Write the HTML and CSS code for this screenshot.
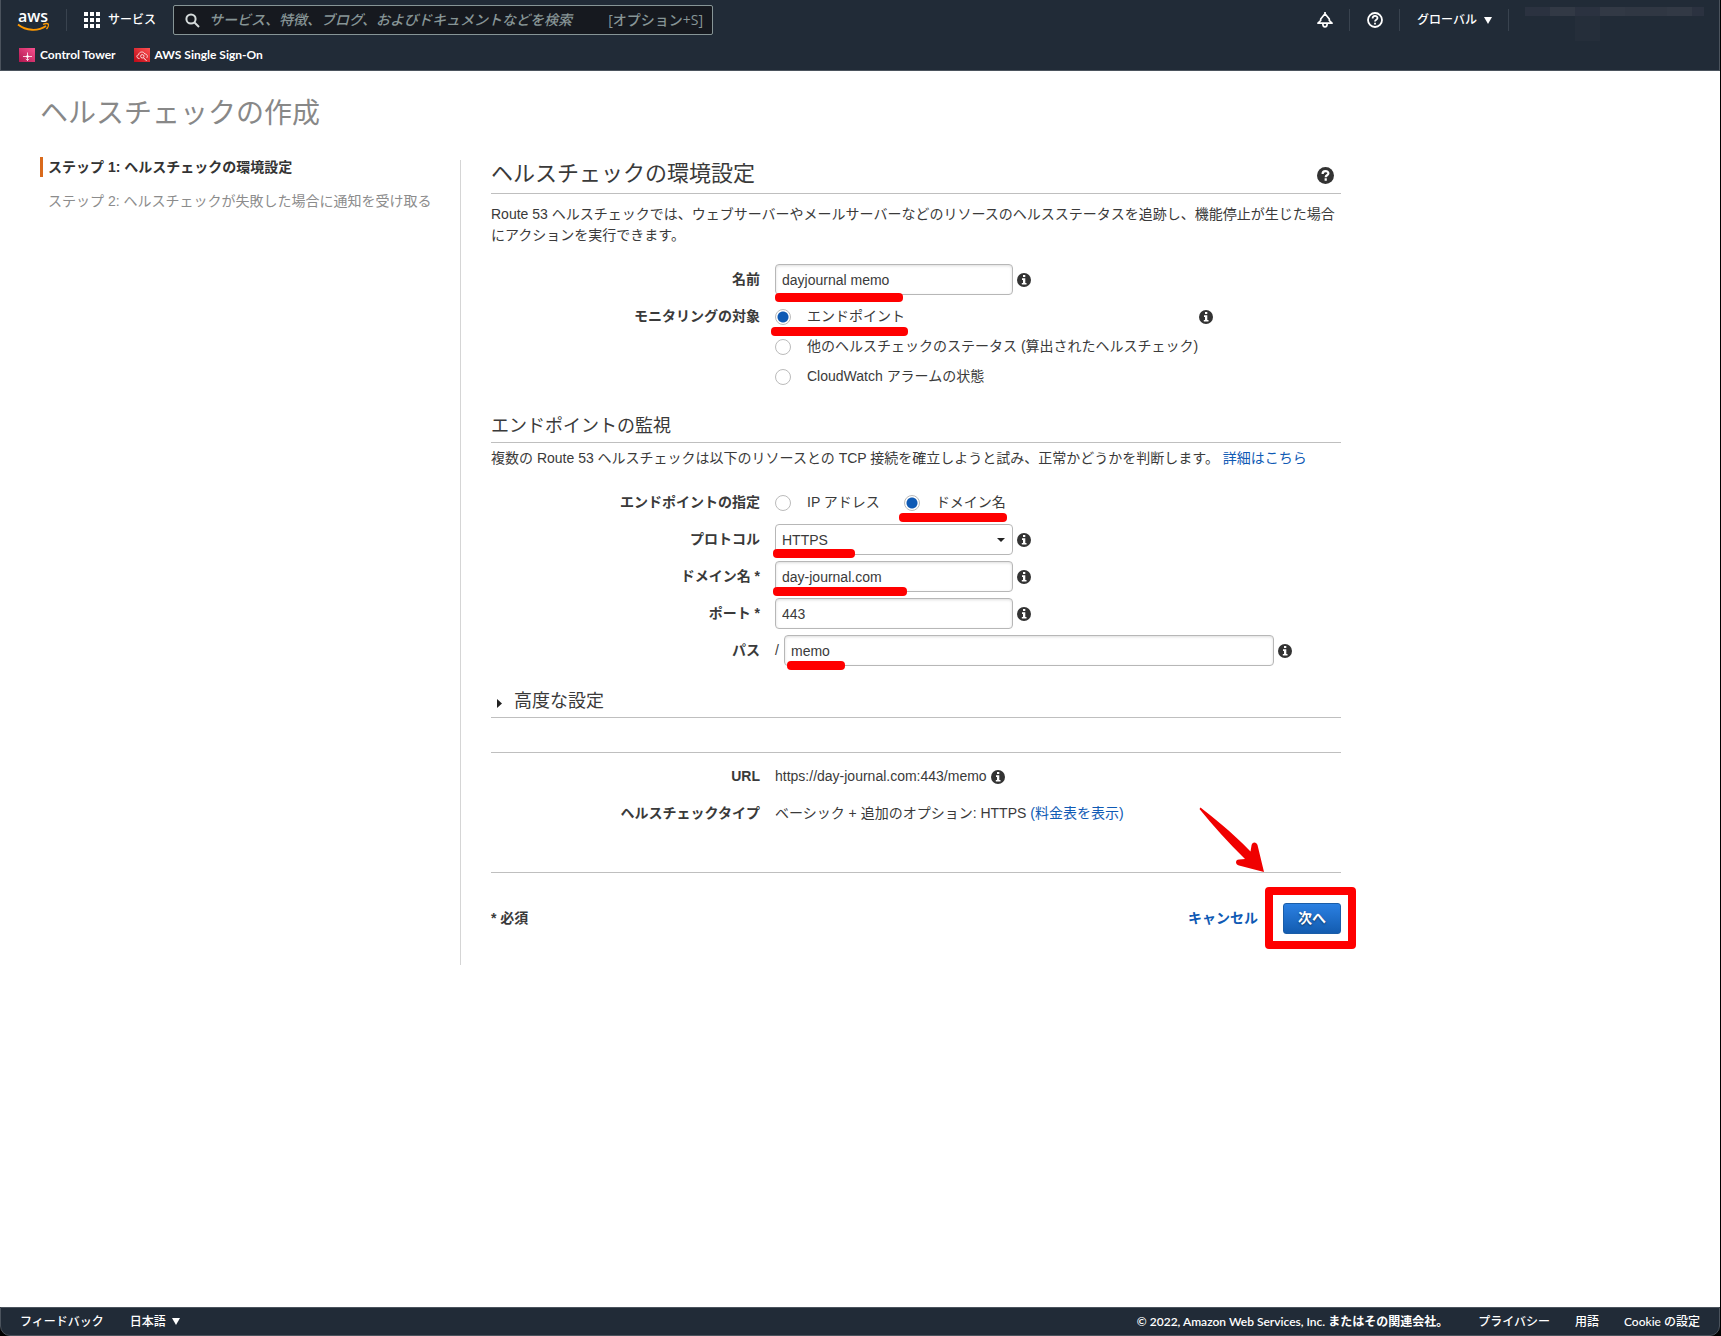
FILE: index.html
```html
<!DOCTYPE html>
<html lang="ja">
<head>
<meta charset="utf-8">
<meta name="viewport" content="width=device-width, initial-scale=1">
<title>ヘルスチェックの作成</title>
<link rel="stylesheet" href="styles.css">
</head>
<body>
<svg class="defs" aria-hidden="true">
  <symbol id="info" viewBox="0 0 14 14">
    <circle cx="7" cy="7" r="7" fill="#333"/>
    <path d="M6 2h2.3v2H6zM5 5.3h3.3v4.6h1.2v1.6H4.8V9.900H6V6.900H5z" fill="#fff"/>
  </symbol>
</svg>

<header class="top">
  <div class="bar">
    <a class="logo" href="#" aria-label="AWS">
      <svg width="36" height="26" viewBox="0 0 36 26">
        <text class="logo-text" x="1" y="15">aws</text>
        <path d="M1 17.500C9 24 21 24.500 29 19" fill="none" stroke="#f90" stroke-width="1.800"/>
        <path d="M26 17.300c2-.8 4.500-.9 5.200-.3.600.8-.2 3.300-1.800 5" fill="none" stroke="#f90" stroke-width="1.400"/>
      </svg>
    </a>
    <span class="sep"></span>
    <button class="services" type="button">
      <svg width="16" height="16" viewBox="0 0 16 16" fill="#fff">
        <path d="M0 0h4v4H0zM6 0h4v4H6zM12 0h4v4h-4zM0 6h4v4H0zM6 6h4v4H6zM12 6h4v4h-4zM0 12h4v4H0zM6 12h4v4H6zM12 12h4v4h-4z"/>
      </svg>
      サービス
    </button>
    <div class="search">
      <svg width="15" height="15" viewBox="0 0 15 15" fill="none" stroke="#d5dbdb" stroke-width="2">
        <circle cx="6" cy="6" r="4.600"/><path d="M9.500 9.500l4.500 4.500"/>
      </svg>
      <input type="search" aria-label="検索" placeholder="サービス、特徴、ブログ、およびドキュメントなどを検索">
      <span class="shortcut">[オプション+S]</span>
    </div>
    <div class="tools">
      <button class="tool" type="button" aria-label="通知">
        <svg width="16" height="16" viewBox="0 0 16 16" fill="none" stroke="#fff" stroke-width="1.700" stroke-linejoin="round">
          <path d="M8 0v2M1 11.200h14L12.300 8.500V7L8 1.800 3.700 7v1.500z"/>
          <path d="M5.800 11.500c0 4.500 4.400 4.500 4.400 0"/>
        </svg>
      </button>
      <span class="sep"></span>
      <button class="tool" type="button" aria-label="ヘルプ">
        <svg width="16" height="16" viewBox="0 0 16 16" fill="none" stroke="#fff" stroke-width="1.800">
          <circle cx="8" cy="8" r="7"/><path d="M5.600 6.500C5.600 3 10.500 3.300 10.500 6c0 1.800-2.500 1.700-2.500 3.600M8 10.800v1.800"/>
        </svg>
      </button>
      <span class="sep"></span>
      <button class="tool region" type="button">グローバル
        <svg width="8" height="7" viewBox="0 0 8 7"><path d="M0 0h8L4 7z" fill="#fff"/></svg>
      </button>
      <span class="sep"></span>
      <svg class="account" width="179" height="34" viewBox="0 0 179 34">
        <path d="M0 0h179v9H0z" fill="#2b3240"/>
        <path d="M25 0h25v9H25zM75 0h92v9H75z" fill="#323945"/>
        <path d="M100 0h42v9h-42z" fill="#303743"/>
        <path d="M50 9h25v25H50z" fill="#252e3a"/>
      </svg>
    </div>
  </div>
  <nav class="favorites">
    <a href="#">
      <svg width="16" height="14" viewBox="0 0 16 14">
        <defs><linearGradient id="pink" x1="0" y1="1" x2="1" y2="0"><stop stop-color="#b0174f"/><stop offset="1" stop-color="#f8508f"/></linearGradient></defs>
        <path d="M0 0h16v14H0z" fill="url(#pink)"/>
        <path d="M4 8.500h9M8.500 4.500v8M7 10.800l1.500 1.700 1.500-1.700" fill="none" stroke="#fff" stroke-opacity=".8"/>
        <circle cx="8.500" cy="8.500" r="1.300" fill="#fff"/>
      </svg>
      Control Tower</a>
    <a href="#">
      <svg width="16" height="14" viewBox="0 0 16 14">
        <defs><linearGradient id="red" x1="0" y1="1" x2="1" y2="0"><stop stop-color="#bd0816"/><stop offset="1" stop-color="#ff5252"/></linearGradient></defs>
        <path d="M0 0h16v14H0z" fill="url(#red)"/>
        <path d="M5.500 10.500C2 10.500 2.300 6.800 4.600 6.800 5 3.200 10 3.200 10.800 6c2.700-.2 3.200 3 1.700 4" fill="none" stroke="#fff" stroke-opacity=".8"/>
        <circle cx="8.300" cy="8.300" r="1.700" fill="none" stroke="#fff" stroke-opacity=".8"/><path d="M9.500 9.800l3 3" stroke="#fff"/>
      </svg>
      AWS Single Sign-On</a>
  </nav>
</header>

<div class="page">
  <h1>ヘルスチェックの作成</h1>
  <div class="columns">
    <ol class="steps">
      <li class="current">ステップ 1: ヘルスチェックの環境設定</li>
      <li>ステップ 2: ヘルスチェックが失敗した場合に通知を受け取る</li>
    </ol>
    <main class="content">
      <form>
        <h2>ヘルスチェックの環境設定
          <button class="help" type="button" aria-label="ヘルプ">
            <svg width="17" height="17" viewBox="0 0 17 17"><circle cx="8.500" cy="8.500" r="8.500" fill="#333"/><path d="M5.600 7C5.500 3.200 11.400 3.300 11.400 6.300c0 2-2.700 1.900-2.700 3.900M8.700 11.300v2.400" fill="none" stroke="#fff" stroke-width="2.200"/></svg>
          </button>
        </h2>
        <p class="intro">Route 53 ヘルスチェックでは、ウェブサーバーやメールサーバーなどのリソースのヘルスステータスを追跡し、機能停止が生じた場合にアクションを実行できます。</p>

        <div class="rows">
          <div class="row">
            <label class="name" for="name">名前</label>
            <div class="field"><input class="box" id="name" type="text" value="dayjournal memo"><svg class="info"><use href="#info"/></svg><i class="mark mark-name"></i></div>
          </div>
          <div class="row" role="radiogroup" aria-labelledby="target">
            <span class="name" id="target">モニタリングの対象</span>
            <div class="field">
              <div class="stack">
                <label class="option"><input type="radio" name="target" checked>エンドポイント</label>
                <label class="option"><input type="radio" name="target">他のヘルスチェックのステータス (算出されたヘルスチェック)</label>
                <label class="option"><input type="radio" name="target">CloudWatch アラームの状態</label>
              </div>
              <svg class="info"><use href="#info"/></svg>
              <i class="mark mark-endpoint"></i>
            </div>
          </div>
        </div>

        <h3>エンドポイントの監視</h3>
        <p class="note">複数の Route 53 ヘルスチェックは以下のリソースとの TCP 接続を確立しようと試み、正常かどうかを判断します。 <a href="#">詳細はこちら</a></p>

        <div class="rows">
          <div class="row" role="radiogroup" aria-labelledby="spec">
            <span class="name" id="spec">エンドポイントの指定</span>
            <div class="field inline">
              <label class="option"><input type="radio" name="spec">IP アドレス</label>
              <label class="option"><input type="radio" name="spec" checked>ドメイン名<i class="mark mark-spec"></i></label>
            </div>
          </div>
          <div class="row">
            <label class="name" for="protocol">プロトコル</label>
            <div class="field"><select class="box" id="protocol"><option>HTTPS</option><option>HTTP</option><option>TCP</option></select><svg class="info"><use href="#info"/></svg>
              <svg class="caret" width="8" height="4" viewBox="0 0 8 4"><path d="M0 0h8L4 4z" fill="#222"/></svg><i class="mark mark-protocol"></i></div>
          </div>
          <div class="row">
            <label class="name" for="domain">ドメイン名 *</label>
            <div class="field"><input class="box" id="domain" type="text" value="day-journal.com"><svg class="info"><use href="#info"/></svg><i class="mark mark-domain"></i></div>
          </div>
          <div class="row">
            <label class="name" for="port">ポート *</label>
            <div class="field"><input class="box" id="port" type="text" value="443"><svg class="info"><use href="#info"/></svg></div>
          </div>
          <div class="row">
            <label class="name" for="path">パス</label>
            <div class="field"><span class="slash">/</span><input class="box wide" id="path" type="text" value="memo"><svg class="info"><use href="#info"/></svg><i class="mark mark-path"></i></div>
          </div>
        </div>

        <h3 class="advanced"><button class="toggle" type="button" aria-expanded="false"><svg width="5" height="9" viewBox="0 0 5 9"><path d="M0 0l5 4.500L0 9z" fill="#222"/></svg>高度な設定</button></h3>

        <div class="summary">
          <div class="row"><span class="name">URL</span><div class="field"><span>https://day-journal.com:443/memo</span><svg class="info"><use href="#info"/></svg></div></div>
          <div class="row"><span class="name">ヘルスチェックタイプ</span><div class="field"><span>ベーシック + 追加のオプション: HTTPS <a href="#">(料金表を表示)</a></span></div></div>
        </div>

        <div class="actions">
          <strong>* 必須</strong>
          <a class="cancel" href="#">キャンセル</a>
          <div class="next-wrap">
            <button class="next" type="button">次へ</button>
            <i class="frame"></i>
            <svg class="arrow" width="66" height="66" viewBox="0 0 66 66"><path d="M1.500.500C12 9 32 24 51.500 44.500l1-6c.5-4 5-4 6-.5L65 65 40 58.500c-4-1-4-6 0-6l6-.5C29 35 14 19 .500 2z" fill="#f00000"/></svg>
          </div>
        </div>
      </form>
    </main>
  </div>
</div>

<footer class="bottom">
  <a href="#">フィードバック</a>
  <button type="button">日本語
    <svg width="8" height="7" viewBox="0 0 8 7"><path d="M0 0h8L4 7z" fill="#fff"/></svg>
  </button>
  <div class="legal">
    <span class="copyright">© 2022, Amazon Web Services, Inc. またはその関連会社。</span>
    <a href="#">プライバシー</a>
    <a href="#">用語</a>
    <a href="#">Cookie の設定</a>
  </div>
</footer>
</body>
</html>
```
FILE: styles.css
```css
* { box-sizing: border-box; }

html { background: #000; }

body {
  display: flex;
  flex-direction: column;
  min-height: 100vh;
  margin: 0 1px 0 0;
  color: #3a3a3a;
  font: 14px/21px "Liberation Sans", "Noto Sans CJK JP", sans-serif;
}

button, input, select { font: inherit; color: inherit; }
button { padding: 0; border: 0; background: none; cursor: pointer; }
a { color: #0f5ab4; text-decoration: none; }
svg { display: block; flex: none; }
.defs { position: absolute; width: 0; height: 0; }

/* Top navigation */
.top {
  padding-bottom: 6px;
  border: 1px solid #4b535d;
  border-top: 0;
  background: #212b37;
  color: #fff;
  font: 500 12px/18px "Open Sans", "Noto Sans CJK JP", sans-serif;
}
.bar { display: flex; align-items: center; height: 40px; padding: 0 15px 0 16px; }
.logo { width: 49px; }
.logo svg { overflow: visible; }
.logo-text { fill: #fff; font: 600 16px/20px "Open Sans", sans-serif; }
.sep { width: 1px; height: 22px; background: #39434f; }
.services { display: flex; align-items: center; gap: 8px; margin: 0 17px; }
.search {
  display: flex;
  align-items: center;
  flex: 0 1 540px;
  height: 30px;
  padding: 0 9px 0 11px;
  border: 1px solid #879596;
  border-radius: 2px;
  background: #16191f;
  color: #879596;
  font-size: 14px;
}
.search input {
  flex: 1;
  min-width: 0;
  padding: 0 0 0 9px;
  border: 0;
  outline: 0;
  background: none;
}
.search input::placeholder { color: #879596; font-style: italic; opacity: 1; }
.tools { display: flex; align-items: center; margin-left: auto; }
.tool { display: flex; align-items: center; gap: 7px; padding: 0 16px 0 17px; }
.account { align-self: flex-start; margin-left: 16px; }
.tools .account { margin-top: 8px; }
.favorites { display: flex; gap: 18px; padding: 6px 0 0 18px; }
.favorites a { display: flex; align-items: center; gap: 5px; color: #fff; font-family: Lato, sans-serif; font-weight: 700; }

/* Page */
.page { flex: 1; padding: 23px 40px 40px; background: #fff; }
h1 { margin: 0 0 26px; color: #888; font-size: 28px; font-weight: 400; line-height: 40px; }
.columns { display: flex; align-items: flex-start; }
.steps { flex: 0 1 420px; margin: 0; padding: 0; list-style: none; color: #8c8c8c; }
.steps li { margin-bottom: 14px; padding-left: 5px; border-left: 3px solid transparent; line-height: 20px; }
.steps .current { margin-top: -3px; border-color: #d96a1c; color: #333; font-weight: 700; }
.content { flex: 0 1 881px; padding: 0 0 31px 30px; border-left: 1px solid #d5d5d5; }

h2, h3 { display: flex; align-items: center; margin: 0; border-bottom: 1px solid #bfbfbf; font-weight: 400; }
h2 { padding-bottom: 5px; font-size: 22px; line-height: 28px; }
h3 { margin-top: 22px; padding-bottom: 4px; font-size: 18px; line-height: 24px; }
.advanced { margin-top: 23px; }
.help { margin: 3px 7px 0 auto; }
.intro { margin: 10px 0 18px; }
.note { margin: 5px 0 18px; }

.rows { display: grid; gap: 6px; }
.row { display: grid; grid-template-columns: 269px 1fr; column-gap: 15px; line-height: 31px; }
.name { font-weight: 700; text-align: right; }
.field { position: relative; display: flex; align-items: center; min-height: 31px; }
.box {
  width: 238px;
  height: 31px;
  padding: 1px 6px 0;
  border: 1px solid #b7b7b7;
  border-radius: 4px;
  background: #fff;
  box-shadow: inset 0 1px 3px #ddd;
}
select.box { padding-top: 0; appearance: none; box-shadow: none; }
.wide { flex: 0 1 490px; }
.slash { width: 9px; }
.info { width: 14px; height: 14px; margin-left: 4px; }
.stack { padding-top: 1px; }
.stack + .info { align-self: flex-start; margin: 9px 0 0 1px; }
.option { position: relative; display: flex; align-items: flex-start; height: 30px; line-height: 28px; }
.inline { gap: 24px; }
input[type="radio"] {
  appearance: none;
  width: 16px;
  height: 16px;
  margin: 7px 16px 0 0;
  border: 1px solid #bbb;
  border-radius: 50%;
  background: #fff;
}
input[type="radio"]:checked { background: radial-gradient(circle, #0f5ab4 5px, #fff 6px); }
.caret { position: absolute; left: 222px; top: 14px; }
.toggle { display: flex; align-items: center; gap: 12px; padding-left: 6px; }
.toggle svg { margin-top: 4px; }

.summary { display: grid; gap: 6px; margin-top: 34px; padding: 8px 0 43px; border: solid #bfbfbf; border-width: 1px 0; }
.actions { display: flex; align-items: center; margin-top: 30px; }
.cancel { margin-left: auto; font-weight: 700; }
.next-wrap { position: relative; margin-left: 25px; }
.next {
  display: block;
  width: 58px;
  height: 31px;
  border: 1px solid #1a5da8;
  border-radius: 3px;
  background: linear-gradient(#2b80e2, #135cb0);
  color: #fff;
  font-weight: 700;
  text-shadow: 0 1px 2px #0008;
}

/* Red annotations drawn over the form */
.mark { position: absolute; height: 9px; border-radius: 4px; background: #f00; }
.mark-name { left: 0; top: 29px; width: 128px; }
.mark-endpoint { left: -4px; top: 26px; width: 137px; }
.mark-spec { left: -5px; top: 25px; width: 108px; }
.mark-protocol { left: -2px; top: 25px; width: 82px; }
.mark-domain { left: -2px; top: 26px; width: 134px; }
.mark-path { left: 12px; top: 26px; width: 58px; }
.frame { position: absolute; inset: -16px -15px -15px -18px; border: 8px solid #f00; border-radius: 4px; pointer-events: none; }
.arrow { position: absolute; right: 76px; top: -96px; }

/* Footer */
.bottom {
  display: flex;
  align-items: center;
  gap: 26px;
  height: 29px;
  padding: 0 19px;
  border: 1px solid #4b535d;
  border-radius: 0 0 10px 10px;
  background: #212b37;
  color: #fff;
  font: 500 12px/18px Lato, "Noto Sans CJK JP", sans-serif;
}
.bottom a { color: #fff; }
.bottom button { display: flex; align-items: center; gap: 6px; }
.legal { display: flex; gap: 25px; margin-left: auto; font-weight: 600; }
.legal a { font-weight: 500; }
.copyright { margin-right: 5px; }
```
